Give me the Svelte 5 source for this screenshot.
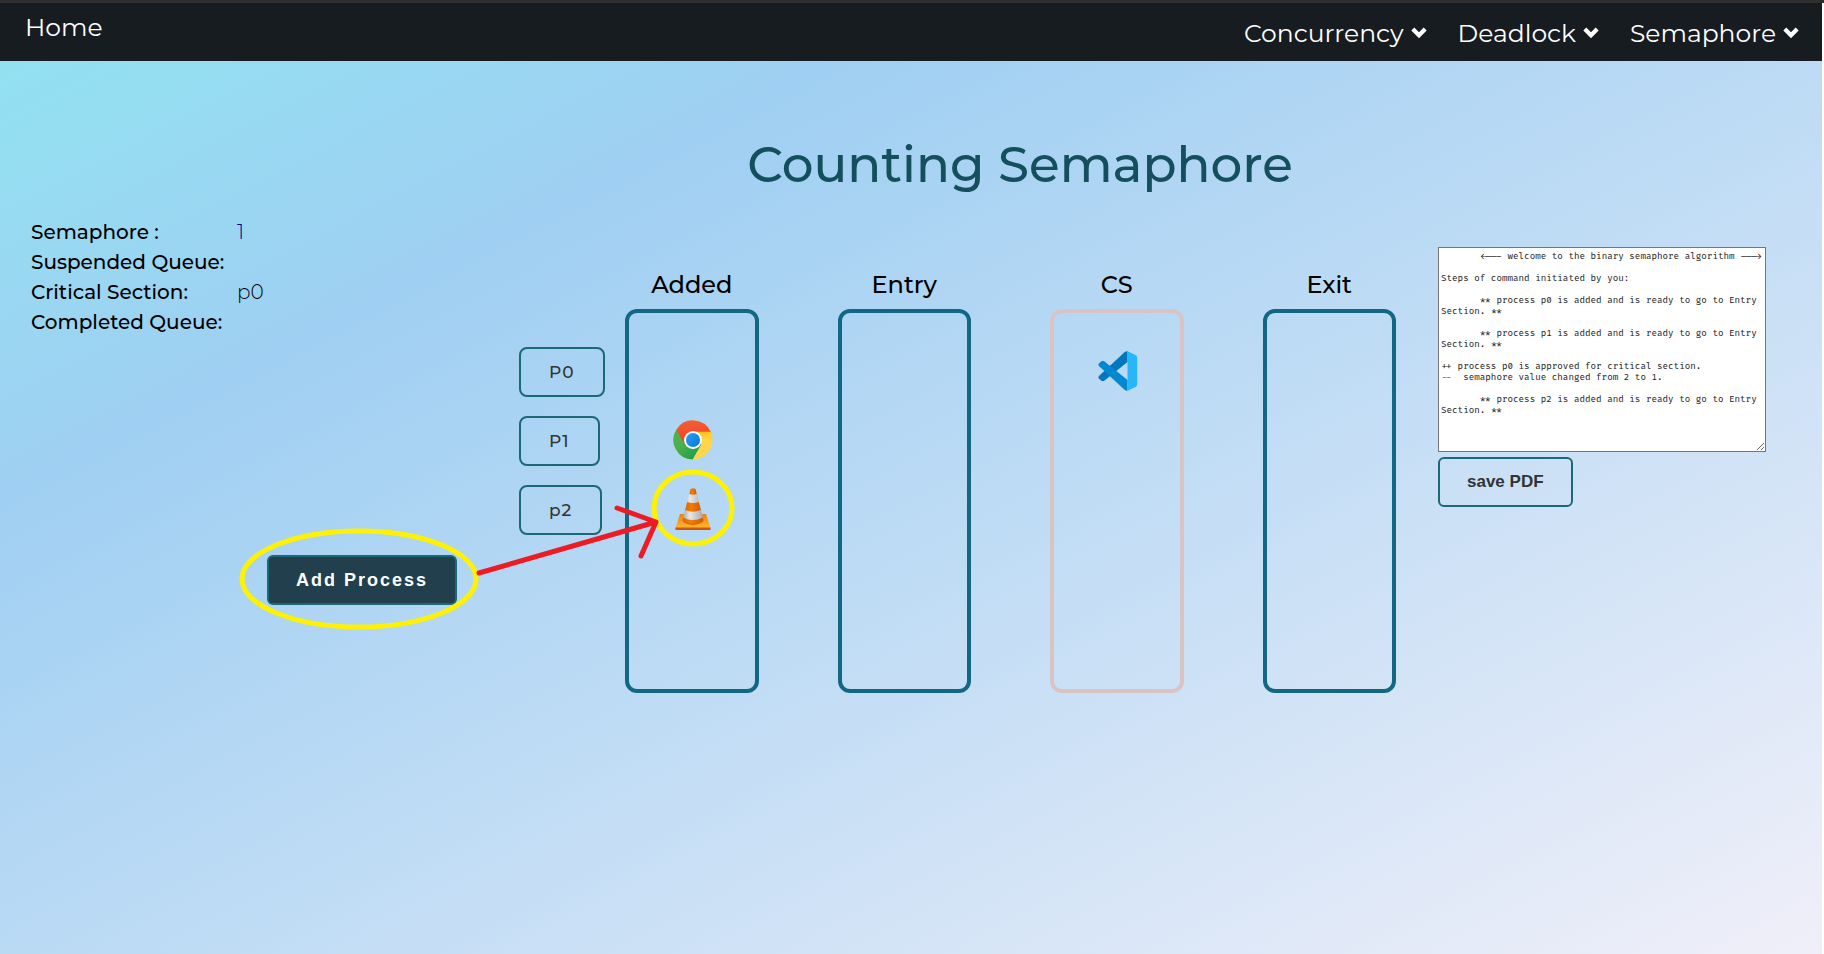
<script>
  const menus = ['Concurrency', 'Deadlock', 'Semaphore'];

  const stats = [
    { label: 'Semaphore :', value: '1', tone: 'count' },
    { label: 'Suspended Queue:', value: '', tone: '' },
    { label: 'Critical Section:', value: 'p0', tone: '' },
    { label: 'Completed Queue:', value: '', tone: '' }
  ];

  const processes = ['P0', 'P1', 'p2'];

  const lanes = [
    { name: 'Added', slots: ['', 'chrome', 'vlc'], busy: false },
    { name: 'Entry', slots: [], busy: false },
    { name: 'CS', slots: ['vscode'], busy: true },
    { name: 'Exit', slots: [], busy: false }
  ];

  const added = (p) => `\t** process ${p} is added and is ready to go to Entry Section. **\n`;

  let log = $state(
    [
      '\t<--- welcome to the binary semaphore algorithm --->\n',
      'Steps of command initiated by you:\n',
      added('p0'),
      added('p1'),
      '++ process p0 is approved for critical section.',
      '--  semaphore value changed from 2 to 1.\n',
      added('p2')
    ].join('\n')
  );
</script>

<div class="page">
  <div class="canvas">
    <nav>
      <a class="home" href="#home">Home</a>
      <div class="menus">
        {#each menus as menu}
          <button class="menu" type="button">
            {menu}
            <svg viewBox="0 0 16 14" width="16" height="14" aria-hidden="true">
              <path d="M1.800 3 8 9.200 14.200 3" fill="none" stroke="#fff" stroke-width="4.200" />
            </svg>
          </button>
        {/each}
      </div>
    </nav>

    <h1>Counting Semaphore</h1>

    <main>
      <section class="side">
        <dl>
          {#each stats as s}
            <dt>{s.label}</dt>
            <dd class={s.tone}>{s.value}</dd>
          {/each}
        </dl>
        <div class="processes">
          {#each processes as p}
            <button class="outline" type="button">{p}</button>
          {/each}
        </div>
        <div class="add">
          <button class="primary" type="button">Add Process</button>
          <svg class="mark" viewBox="0 0 430 170" width="430" height="170" aria-hidden="true">
            <ellipse cx="120" cy="109" rx="117" ry="48" fill="none" stroke="#fff200" stroke-width="5" />
            <path d="M240 103 417 52M378 38l39 14-15 34" fill="none" stroke="#ed1c24" stroke-width="5" stroke-linecap="round" stroke-linejoin="round" />
          </svg>
        </div>
      </section>

      <section class="lanes">
        {#each lanes as lane}
          <div class="lane">
            <h2>{lane.name}</h2>
            <div class="track" class:busy={lane.busy}>
              {#each lane.slots as slot}
                <div class="slot">
                  {#if slot === 'chrome'}
                    <svg viewBox="0 0 48 48" width="40" height="40" role="img" aria-label="Chrome">
                      <defs>
                        <linearGradient id="cr" x1="0" y1="0" x2="0" y2="1"><stop offset="0" stop-color="#f0603c" /><stop offset="1" stop-color="#fb3a12" /></linearGradient>
                        <linearGradient id="cy" x1="0" y1="0" x2="0" y2="1"><stop offset=".25" stop-color="#ffc107" /><stop offset=".5" stop-color="#ffd54f" /></linearGradient>
                        <linearGradient id="cg" x1="0" y1="0" x2="1" y2="1"><stop offset=".4" stop-color="#4caf50" /><stop offset="1" stop-color="#129a48" /></linearGradient>
                        <linearGradient id="cb" x1="0" y1="0" x2="1" y2="1"><stop offset="0" stop-color="#2fa0f5" /><stop offset="1" stop-color="#0277d8" /></linearGradient>
                      </defs>
                      <circle cx="24" cy="24" r="23.5" fill="url(#cy)" />
                      <path d="M4 11.6A23.5 23.5 0 0 0 23.5 47.5L34 29 24 24Z" fill="url(#cg)" />
                      <path d="M4 11.6A23.5 23.5 0 0 1 45.3 14H24L14.5 29.5Z" fill="url(#cr)" />
                      <circle cx="24" cy="24" r="10.8" fill="#fff" />
                      <circle cx="24" cy="24" r="8.5" fill="url(#cb)" />
                    </svg>
                  {:else if slot === 'vlc'}
                    <svg viewBox="0 0 36 42" width="36" height="42" role="img" aria-label="VLC">
                      <defs>
                        <linearGradient id="vo" x1="0" x2="1" y1="0" y2="0"><stop offset="0" stop-color="#d96a0c" /><stop offset=".4" stop-color="#f57c00" /><stop offset="1" stop-color="#c85a08" /></linearGradient>
                        <linearGradient id="vw" x1="0" x2="1" y1="0" y2="0"><stop offset="0" stop-color="#a6a6a6" /><stop offset=".35" stop-color="#e8e8e8" /><stop offset="1" stop-color="#a6a6a6" /></linearGradient>
                        <linearGradient id="vb" x1="0" x2="0" y1="0" y2="1"><stop offset="0" stop-color="#f08010" /><stop offset="1" stop-color="#ffb52e" /></linearGradient>
                      </defs>
                      <path d="M5 26h26l4.5 14H.5Z" fill="url(#vb)" />
                      <path d="M.5 39.5h35V42H.5Z" fill="#cf5800" />
                      <path d="M8 29h20v5q-10 6-20 0Z" fill="#dc6507" />
                      <path d="M15.500 1q2.500-1.500 5 0l7.800 30q-10.300 6-20.600 0Z" fill="url(#vw)" />
                      <path d="M15.500 1q2.500-1.500 5 0l1.200 5q-3.700 1.300-7.400 0Z" fill="url(#vo)" />
                      <path d="M12.200 14q5.800 2 11.600 0l2.100 8q-7.900 3.500-15.800 0Z" fill="url(#vo)" />
                      <path d="M8.200 29.500q9.800 5 19.600 0l.8 3q-10.600 7-21.200 0Z" fill="url(#vo)" />
                    </svg>
                  {:else if slot === 'vscode'}
                    <svg viewBox="0 0 40 40" width="40" height="40" role="img" aria-label="VS Code">
                      <path d="M29.500.2V11L6.500 29.500q-1.700 1.200-3.300.1L1 27.800q-1.200-1.600.2-3L26.500 1.200Q28 0 29.500.2Z" fill="#0277bd" />
                      <path d="M29.500 39.800V29L6.500 10.500q-1.700-1.200-3.300-.1L1 12.200q-1.200 1.600.2 3L26.500 38.800Q28 40 29.500 39.800Z" fill="#0288d1" />
                      <path d="M29.500.2 37.500 4q1.700.8 1.700 2.500v27q0 1.700-1.700 2.500l-8 3.800Z" fill="#29b6f6" />
                    </svg>
                  {/if}
                  {#if slot === 'vlc'}
                    <svg class="ring" viewBox="0 0 84 78" width="84" height="78" aria-hidden="true">
                      <ellipse cx="42" cy="39" rx="39" ry="36" fill="none" stroke="#fff200" stroke-width="5" />
                    </svg>
                  {/if}
                </div>
              {/each}
            </div>
          </div>
        {/each}
      </section>

      <section class="log">
        <textarea aria-label="Log" spellcheck="false" bind:value={log}></textarea>
        <button class="outline save" type="button">save PDF</button>
      </section>
    </main>
  </div>
</div>

<style>
  :global(body) {
    background: #fff;
  }
  .page {
    box-sizing: border-box;
    display: flex;
    min-height: 100vh;
    padding-right: 2px;
    border-top: 3px solid #2e2e2e;
    font-family: Montserrat, Inter, sans-serif;
  }
  .canvas {
    flex: 1;
    background: linear-gradient(to bottom right, #90e4f1, #9fcff2 26%, #f0eff9);
  }
  button {
    font: inherit;
    cursor: pointer;
  }
  nav {
    display: flex;
    justify-content: space-between;
    align-items: flex-start;
    height: 58px;
    padding: 0 23px 0 25px;
    box-sizing: border-box;
    background: #161c20;
    font-size: 25px;
    line-height: 32px;
  }
  .home {
    padding-top: 8px;
    color: #fff;
    text-decoration: none;
  }
  .menus {
    display: flex;
    gap: 31px;
    padding-top: 14px;
  }
  .menu {
    display: flex;
    align-items: center;
    gap: 7px;
    padding: 0;
    border: 0;
    background: none;
    color: #fff;
  }
  h1 {
    margin: 72px 0 0 218px;
    text-align: center;
    font-size: 50px;
    line-height: 64px;
    font-weight: 500;
    color: #134f5c;
  }
  main {
    display: grid;
    grid-template-columns: 625fr 771fr 426fr;
  }
  .side {
    display: flex;
    flex-direction: column;
    padding-top: 20px;
  }
  dl {
    display: grid;
    grid-template-columns: 206px auto;
    grid-auto-rows: 30px;
    margin: 0 0 10px 31px;
    font-size: 20px;
    line-height: 30px;
  }
  dt {
    font-weight: 500;
  }
  dd {
    margin: 0;
    font-weight: 300;
  }
  .count {
    color: #000080;
  }
  .processes {
    display: flex;
    flex-direction: column;
    align-items: flex-start;
    align-self: flex-end;
    gap: 19px;
    width: 106px;
  }
  .outline {
    height: 50px;
    padding: 0 28px;
    border: 2px solid #1b6975;
    border-radius: 8px;
    background: none;
    color: #333;
    font-size: 17px;
    font-weight: 500;
    letter-spacing: 1px;
  }
  .add {
    position: relative;
    align-self: flex-end;
    margin: 20px 168px 0 0;
  }
  .primary {
    height: 50px;
    padding: 0 27px;
    border: 2px solid #1b6975;
    border-radius: 6px;
    background: #213f4d;
    color: #fff;
    font-family: Arial, "Liberation Sans", sans-serif;
    font-size: 18px;
    font-weight: 700;
    letter-spacing: 2px;
  }
  .mark {
    position: absolute;
    left: -28px;
    top: -85px;
    z-index: 1;
    pointer-events: none;
  }
  .lanes {
    display: flex;
    gap: 79px;
    padding-top: 72px;
  }
  .lane {
    flex: 1;
  }
  h2 {
    margin: 0 0 8px;
    text-align: center;
    font-size: 24px;
    line-height: 32px;
    font-weight: 500;
    color: #000;
  }
  .track {
    box-sizing: border-box;
    height: 384px;
    padding-top: 23px;
    border: 4px solid #126782;
    border-radius: 12px;
  }
  .busy {
    border-color: #dac3c3;
  }
  .slot {
    position: relative;
    display: flex;
    align-items: center;
    justify-content: center;
    height: 69px;
    padding-left: 2px;
  }
  .ring {
    position: absolute;
    left: 22px;
    top: -5px;
  }
  .log {
    display: flex;
    flex-direction: column;
    align-items: flex-start;
    gap: 5px;
    padding: 50px 56px 0 42px;
  }
  textarea {
    box-sizing: border-box;
    width: 100%;
    height: 205px;
    padding: 3px 2px;
    border: 1px solid #767676;
    background: #fff;
    color: #222;
    font-family: "Fira Code", "Liberation Mono", monospace;
    font-size: 9px;
    line-height: 11px;
    tab-size: 7;
    overflow: auto;
  }
  .save {
    padding: 0 27px;
    border-radius: 6px;
    font-family: Arial, "Liberation Sans", sans-serif;
    font-size: 17px;
    font-weight: 700;
    letter-spacing: 0;
  }
</style>
